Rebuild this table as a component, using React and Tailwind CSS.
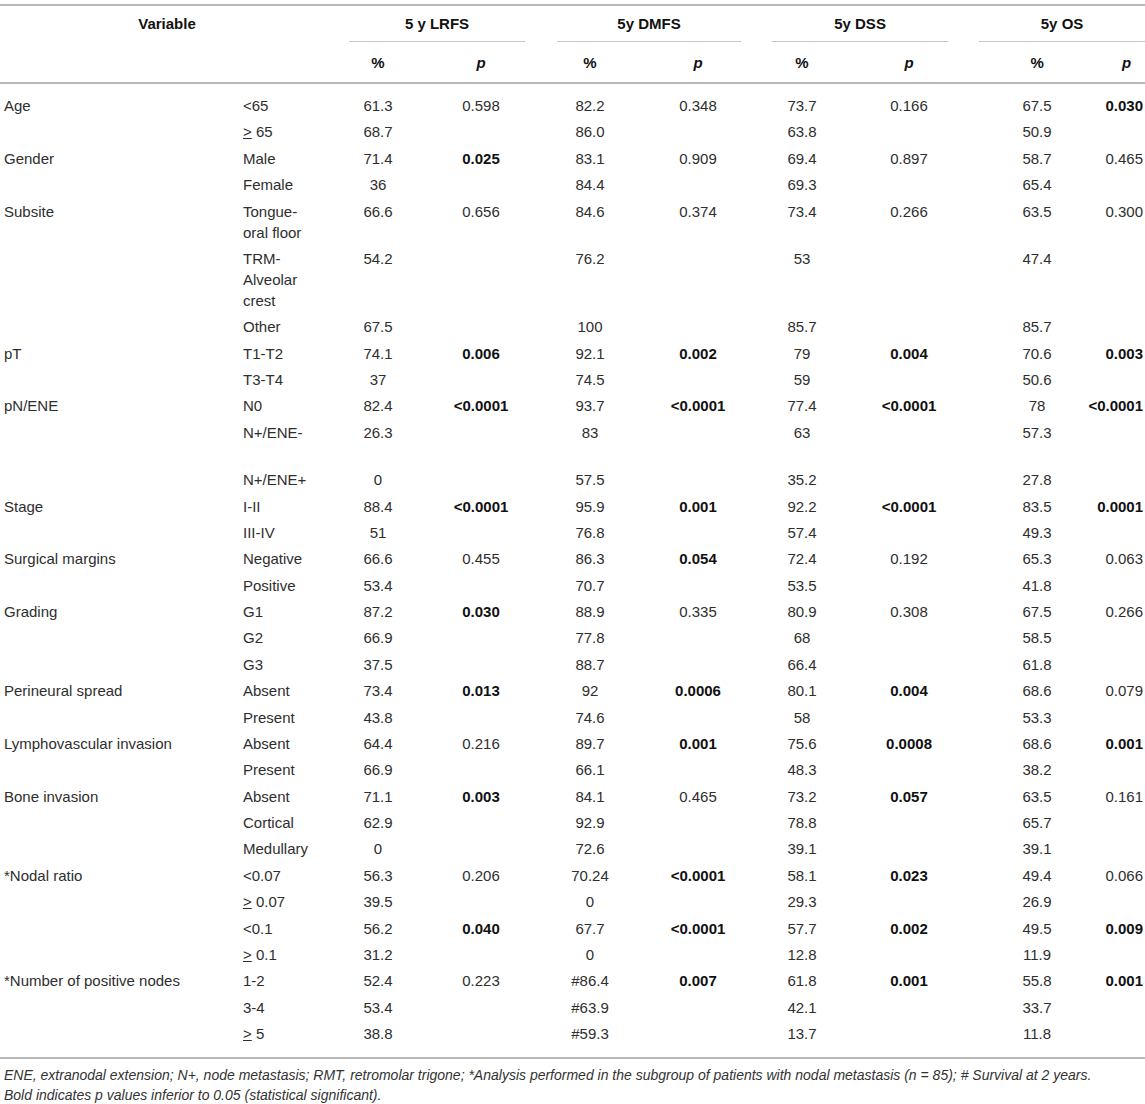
import React from 'react';

const GE = <span className="underline">&gt;</span>;

const ROWS = [
  { v: 'Age', s: '<65', d: ['61.3', '0.598', '82.2', '0.348', '73.7', '0.166', '67.5', 'b0.030'] },
  { s: <>{GE} 65</>, d: ['68.7', '', '86.0', '', '63.8', '', '50.9', ''] },
  { v: 'Gender', s: 'Male', d: ['71.4', 'b0.025', '83.1', '0.909', '69.4', '0.897', '58.7', '0.465'] },
  { s: 'Female', d: ['36', '', '84.4', '', '69.3', '', '65.4', ''] },
  { v: 'Subsite', s: <>Tongue-<br />oral floor</>, d: ['66.6', '0.656', '84.6', '0.374', '73.4', '0.266', '63.5', '0.300'] },
  { s: <>TRM-<br />Alveolar<br />crest</>, d: ['54.2', '', '76.2', '', '53', '', '47.4', ''] },
  { s: 'Other', d: ['67.5', '', '100', '', '85.7', '', '85.7', ''] },
  { v: 'pT', s: 'T1-T2', d: ['74.1', 'b0.006', '92.1', 'b0.002', '79', 'b0.004', '70.6', 'b0.003'] },
  { s: 'T3-T4', d: ['37', '', '74.5', '', '59', '', '50.6', ''] },
  { v: 'pN/ENE', s: 'N0', d: ['82.4', 'b<0.0001', '93.7', 'b<0.0001', '77.4', 'b<0.0001', '78', 'b<0.0001'] },
  { s: <>N+/ENE-<br />&nbsp;</>, d: ['26.3', '', '83', '', '63', '', '57.3', ''] },
  { s: 'N+/ENE+', d: ['0', '', '57.5', '', '35.2', '', '27.8', ''] },
  { v: 'Stage', s: 'I-II', d: ['88.4', 'b<0.0001', '95.9', 'b0.001', '92.2', 'b<0.0001', '83.5', 'b0.0001'] },
  { s: 'III-IV', d: ['51', '', '76.8', '', '57.4', '', '49.3', ''] },
  { v: 'Surgical margins', s: 'Negative', d: ['66.6', '0.455', '86.3', 'b0.054', '72.4', '0.192', '65.3', '0.063'] },
  { s: 'Positive', d: ['53.4', '', '70.7', '', '53.5', '', '41.8', ''] },
  { v: 'Grading', s: 'G1', d: ['87.2', 'b0.030', '88.9', '0.335', '80.9', '0.308', '67.5', '0.266'] },
  { s: 'G2', d: ['66.9', '', '77.8', '', '68', '', '58.5', ''] },
  { s: 'G3', d: ['37.5', '', '88.7', '', '66.4', '', '61.8', ''] },
  { v: 'Perineural spread', s: 'Absent', d: ['73.4', 'b0.013', '92', 'b0.0006', '80.1', 'b0.004', '68.6', '0.079'] },
  { s: 'Present', d: ['43.8', '', '74.6', '', '58', '', '53.3', ''] },
  { v: 'Lymphovascular invasion', s: 'Absent', d: ['64.4', '0.216', '89.7', 'b0.001', '75.6', 'b0.0008', '68.6', 'b0.001'] },
  { s: 'Present', d: ['66.9', '', '66.1', '', '48.3', '', '38.2', ''] },
  { v: 'Bone invasion', s: 'Absent', d: ['71.1', 'b0.003', '84.1', '0.465', '73.2', 'b0.057', '63.5', '0.161'] },
  { s: 'Cortical', d: ['62.9', '', '92.9', '', '78.8', '', '65.7', ''] },
  { s: 'Medullary', d: ['0', '', '72.6', '', '39.1', '', '39.1', ''] },
  { v: '*Nodal ratio', s: '<0.07', d: ['56.3', '0.206', '70.24', 'b<0.0001', '58.1', 'b0.023', '49.4', '0.066'] },
  { s: <>{GE} 0.07</>, d: ['39.5', '', '0', '', '29.3', '', '26.9', ''] },
  { s: '<0.1', d: ['56.2', 'b0.040', '67.7', 'b<0.0001', '57.7', 'b0.002', '49.5', 'b0.009'] },
  { s: <>{GE} 0.1</>, d: ['31.2', '', '0', '', '12.8', '', '11.9', ''] },
  { v: '*Number of positive nodes', s: '1-2', d: ['52.4', '0.223', '#86.4', 'b0.007', '61.8', 'b0.001', '55.8', 'b0.001'] },
  { s: '3-4', d: ['53.4', '', '#63.9', '', '42.1', '', '33.7', ''] },
  { s: <>{GE} 5</>, d: ['38.8', '', '#59.3', '', '13.7', '', '11.8', ''] },
];

const GROUPS = [
  { l: '5 y LRFS', line: 'ml-[15px] mr-[15px]' },
  { l: '5y DMFS', line: 'ml-[17px] mr-[15px]' },
  { l: '5y DSS', line: 'ml-[16px] mr-[22px]' },
  { l: '5y OS', line: 'ml-[9px] mr-0' },
];

function Cell({ val, pad, last }) {
  const bold = val.startsWith('b');
  const text = bold ? val.slice(1) : val;
  return (
    <td className={`align-top ${last ? '' : 'text-center'} ${pad} ${bold ? 'font-bold text-[#111]' : ''}`}>
      {last ? <div className="-ml-[40px] pr-[2px] text-right whitespace-nowrap">{text}</div> : text}
    </td>
  );
}

export default function App() {
  return (
    <div className="w-[1145px] overflow-hidden bg-white pt-[4px] text-[15px] leading-[21px] text-[#2e2e2e]" style={{ fontFamily: '"Liberation Sans", Arial, sans-serif' }}>
      <table className="table-fixed border-collapse w-[1145px]">
        <colgroup>
          <col className="w-[239px]" />
          <col className="w-[95px]" />
          <col className="w-[88px]" />
          <col className="w-[118px]" />
          <col className="w-[100px]" />
          <col className="w-[116px]" />
          <col className="w-[92px]" />
          <col className="w-[122px]" />
          <col className="w-[134px]" />
          <col className="w-[41px]" />
        </colgroup>
        <thead>
          <tr className="border-t-2 border-[#b8b8b8]">
            <th colSpan={2} className="font-bold text-center text-[#111] pt-[7px] pb-[8px] align-top">Variable</th>
            {GROUPS.map((g) => (
              <th key={g.l} colSpan={2} className="font-bold text-center text-[#111] p-0 align-top">
                <div className={`pt-[7px] pb-[7px] border-b border-[#c4c4c4] ${g.line}`}>{g.l}</div>
              </th>
            ))}
          </tr>
          <tr className="border-b-2 border-[#b8b8b8]">
            <th colSpan={2} />
            {GROUPS.map((g, gi) => (
              <React.Fragment key={g.l}>
                <th className="font-bold text-center text-[#111] pt-[10px] pb-[9px]">%</th>
                <th className={`font-bold italic text-center text-[#111] pt-[10px] pb-[9px] ${gi === 3 ? 'pl-[4px]' : ''}`}>p</th>
              </React.Fragment>
            ))}
          </tr>
        </thead>
        <tbody>
          {ROWS.map((r, i) => {
            const pad = i === 0 ? 'pt-[11px] pb-[2.7px]' : i === ROWS.length - 1 ? 'pt-[2.7px] pb-[13px]' : 'py-[2.7px]';
            return (
              <tr key={i} className={i === ROWS.length - 1 ? 'border-b-2 border-[#b8b8b8]' : ''}>
                <td className={`pl-[4px] align-top ${pad}`}>{r.v || ''}</td>
                <td className={`pl-[4px] align-top ${pad}`}>{r.s}</td>
                {r.d.map((val, j) => (
                  <Cell key={j} val={val} pad={pad} last={j === 7} />
                ))}
              </tr>
            );
          })}
        </tbody>
      </table>
      <div className="pl-[4px] pt-[6px] pb-[8px] text-[14px] leading-[20px] italic text-[#333]">
        <p>ENE, extranodal extension; N+, node metastasis; RMT, retromolar trigone; *Analysis performed in the subgroup of patients with nodal metastasis (n = 85); # Survival at 2 years.</p>
        <p>Bold indicates p values inferior to 0.05 (statistical significant).</p>
      </div>
    </div>
  );
}
